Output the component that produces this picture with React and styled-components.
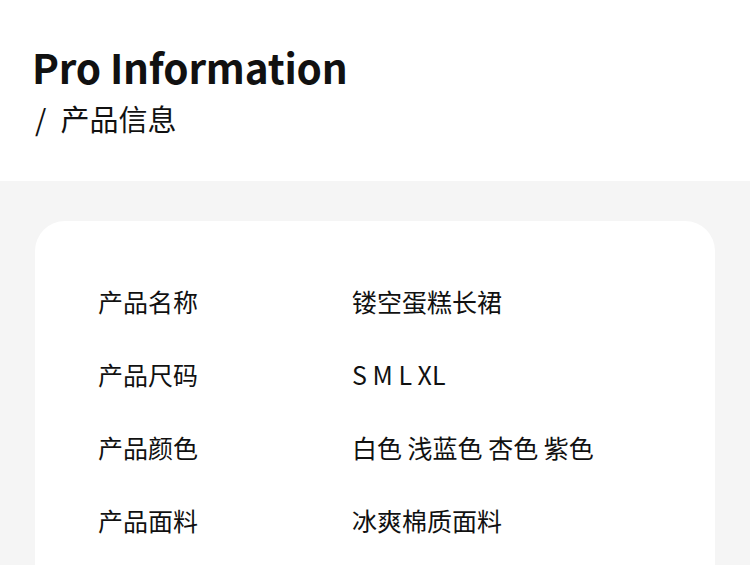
import styled, { createGlobalStyle } from 'styled-components';

const FONT = `"Noto Sans CJK SC", "Noto Sans", sans-serif`;

const Global = createGlobalStyle`
  html, body { margin: 0; padding: 0; background: #f5f5f5; }
  body { font-family: ${FONT}; color: #111; }
`;

const Page = styled.div`
  width: 750px;
  height: 565px;
  overflow: hidden;
  background: #f5f5f5;
`;

const Header = styled.header`
  background: #fff;
  height: 181px;
  padding: 42px 0 0 32px;
  box-sizing: border-box;
`;

const Title = styled.h1`
  margin: 0;
  font-size: 40.5px;
  font-weight: 700;
  line-height: 50px;
  letter-spacing: -0.2px;
`;

const Subtitle = styled.div`
  margin-top: 6px;
  padding-left: 3px;
  font-size: 29px;
  font-weight: 400;
  line-height: 40px;
  display: flex;
  gap: 14px;
`;

const Body = styled.main`
  padding: 40px 35px 0;
`;

const Card = styled.section`
  background: #fff;
  border-radius: 30px;
  padding: 63px 0 40px 63px;
  height: 400px;
  box-sizing: border-box;
  display: grid;
  grid-template-columns: 254px 1fr;
  grid-auto-rows: 73px;
  align-content: start;
`;

const Cell = styled.div`
  font-size: 25px;
  line-height: 34px;
`;

const rows = [
  ['产品名称', '镂空蛋糕长裙'],
  ['产品尺码', 'S M L XL'],
  ['产品颜色', '白色 浅蓝色 杏色 紫色'],
  ['产品面料', '冰爽棉质面料'],
];

export default function App() {
  return (
    <Page>
      <Global />
      <Header>
        <Title>Pro Information</Title>
        <Subtitle><span>/</span><span>产品信息</span></Subtitle>
      </Header>
      <Body>
        <Card>
          {rows.flatMap(([k, v]) => [
            <Cell key={k}>{k}</Cell>,
            <Cell key={k + 'v'}>{v}</Cell>,
          ])}
        </Card>
      </Body>
    </Page>
  );
}
